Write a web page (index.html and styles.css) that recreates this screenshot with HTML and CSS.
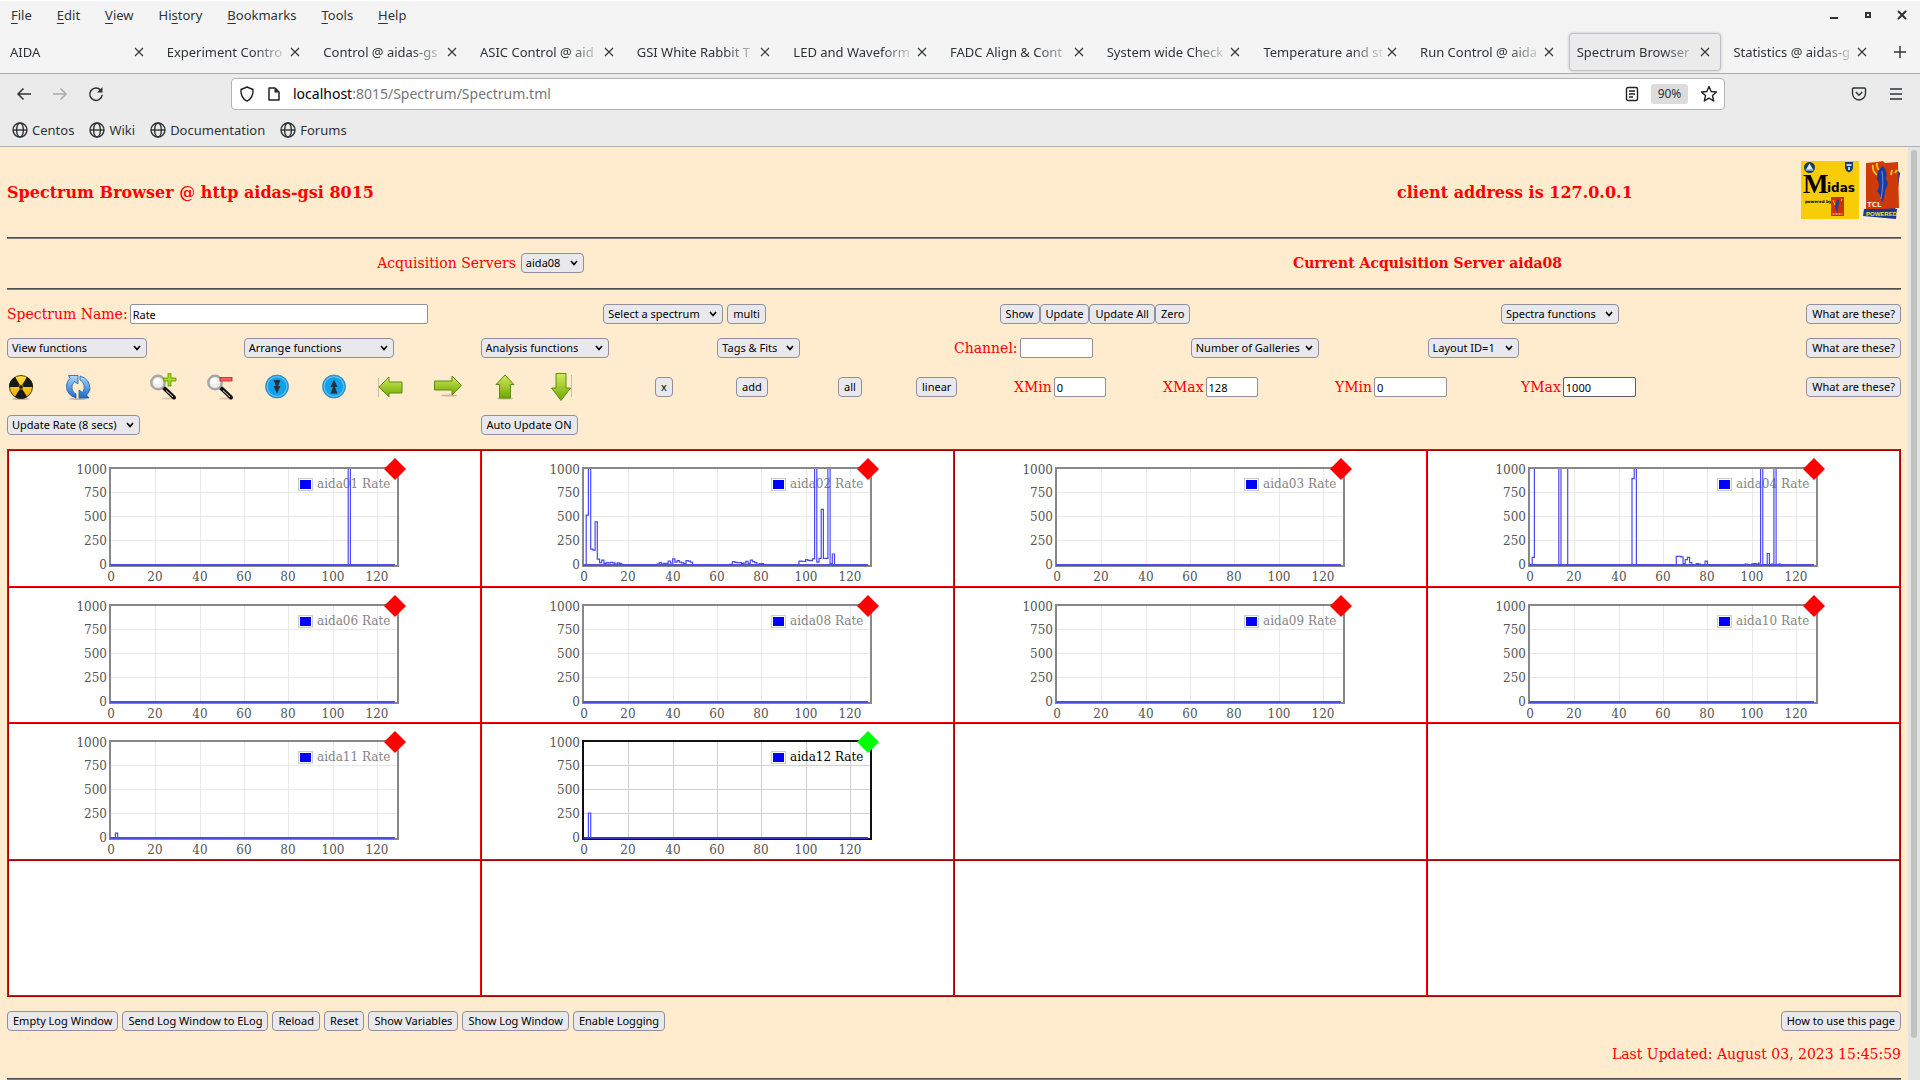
FILE: index.html
```html
<!DOCTYPE html>
<html lang="en">
<head>
<meta charset="utf-8">
<title>Spectrum Browser @ aidas-gsi</title>
<link rel="stylesheet" href="styles.css">
</head>
<body>
<svg class="defs" aria-hidden="true">
  <defs>
    <linearGradient id="green" x1="0" y1="0" x2="0" y2="1"><stop offset="0" stop-color="#d3ea5e"/><stop offset="1" stop-color="#6fa800"/></linearGradient>
    <linearGradient id="yellow" x1="0" y1="0" x2="0" y2="1"><stop offset="0" stop-color="#ffe23a"/><stop offset="1" stop-color="#f0a800"/></linearGradient>
    <linearGradient id="blue" x1="0" y1="0" x2="0" y2="1"><stop offset="0" stop-color="#a8dcff"/><stop offset="1" stop-color="#1a68c8"/></linearGradient>
    <radialGradient id="disc"><stop offset="0" stop-color="#08a4f4"/><stop offset="0.75" stop-color="#10a0ee"/><stop offset="0.85" stop-color="#5cc8fa"/><stop offset="1" stop-color="#1478c4"/></radialGradient>
    <symbol id="close" viewBox="0 0 10 10"><path d="M1 1L9 9M9 1L1 9" stroke="#2e3436" stroke-width="1.1"/></symbol>
    <symbol id="globe" viewBox="0 0 16 16"><g fill="none" stroke="#2e3436" stroke-width="1.4"><circle cx="8" cy="8" r="7"/><ellipse cx="8" cy="8" rx="3.4" ry="7"/><path d="M1 8H15"/></g></symbol>
    <symbol id="lens" viewBox="0 0 28 28"><ellipse cx="20" cy="25.5" rx="7" ry="1" fill="#d9c8ae"/><path d="M14.500 14.500L25 24.500" stroke="#111" stroke-width="4" stroke-linecap="round"/><path d="M17 17.500L24 24" stroke="#ddd" stroke-width="1"/><circle cx="9" cy="9.500" r="6.700" fill="#eee" stroke="#a5a5a5" stroke-width="2.400"/><circle cx="8" cy="8" r="3" fill="#fff"/></symbol>
  </defs>
</svg>

<header class="chrome">
  <div class="menubar">
    <nav class="menus">
      <a href="#"><u>F</u>ile</a><a href="#"><u>E</u>dit</a><a href="#"><u>V</u>iew</a><a href="#">Hi<u>s</u>tory</a><a href="#"><u>B</u>ookmarks</a><a href="#"><u>T</u>ools</a><a href="#"><u>H</u>elp</a>
    </nav>
    <div class="window-buttons">
      <button type="button" aria-label="Minimize"><svg width="10" height="10"><path d="M1 8H9" stroke="#2e3436" stroke-width="2"/></svg></button>
      <button type="button" aria-label="Maximize"><svg width="10" height="10"><rect x="3" y="3" width="4" height="4" fill="none" stroke="#2e3436" stroke-width="2"/></svg></button>
      <button type="button" aria-label="Close"><svg width="10" height="10"><path d="M1 1L9 9M9 1L1 9" stroke="#2e3436" stroke-width="2"/></svg></button>
    </div>
  </div>

  <div class="tabs">
    <div class="tab"><span>AIDA</span><button type="button" aria-label="Close tab"><svg><use href="#close"/></svg></button></div>
    <div class="tab"><span>Experiment Contro</span><button type="button" aria-label="Close tab"><svg><use href="#close"/></svg></button></div>
    <div class="tab"><span>Control @ aidas-gs</span><button type="button" aria-label="Close tab"><svg><use href="#close"/></svg></button></div>
    <div class="tab"><span>ASIC Control @ aid</span><button type="button" aria-label="Close tab"><svg><use href="#close"/></svg></button></div>
    <div class="tab"><span>GSI White Rabbit T</span><button type="button" aria-label="Close tab"><svg><use href="#close"/></svg></button></div>
    <div class="tab"><span>LED and Waveform</span><button type="button" aria-label="Close tab"><svg><use href="#close"/></svg></button></div>
    <div class="tab"><span>FADC Align &amp; Cont</span><button type="button" aria-label="Close tab"><svg><use href="#close"/></svg></button></div>
    <div class="tab"><span>System wide Check</span><button type="button" aria-label="Close tab"><svg><use href="#close"/></svg></button></div>
    <div class="tab"><span>Temperature and st</span><button type="button" aria-label="Close tab"><svg><use href="#close"/></svg></button></div>
    <div class="tab"><span>Run Control @ aida</span><button type="button" aria-label="Close tab"><svg><use href="#close"/></svg></button></div>
    <div class="tab active"><span>Spectrum Browser</span><button type="button" aria-label="Close tab"><svg><use href="#close"/></svg></button></div>
    <div class="tab"><span>Statistics @ aidas-g</span><button type="button" aria-label="Close tab"><svg><use href="#close"/></svg></button></div>
    <button type="button" class="new-tab" aria-label="New tab"><svg width="12" height="12"><path d="M6 0V12M0 6H12" stroke="#2e3436" stroke-width="1.4"/></svg></button>
  </div>

  <div class="toolbar">
    <div class="nav">
      <button type="button" aria-label="Back"><svg width="16" height="16"><path d="M15 8H2M7.500 2.500L2 8L7.500 13.500" fill="none" stroke="#2e3436" stroke-width="1.500"/></svg></button>
      <button type="button" aria-label="Forward"><svg width="16" height="16"><path d="M1 8H14M8.500 2.500L14 8L8.500 13.500" fill="none" stroke="#aaa" stroke-width="1.500"/></svg></button>
      <button type="button" aria-label="Reload"><svg width="16" height="16"><path d="M12.600 4A6.200 6.200 0 1 0 14.200 8.800" fill="none" stroke="#2e3436" stroke-width="1.500"/><path d="M14.500 1V6.500H9Z" fill="#2e3436"/></svg></button>
    </div>
    <div class="url">
      <svg width="16" height="16"><path d="M8 1L14 3.500C14.500 9 12 13 8 15.200C4 13 1.500 9 2 3.500Z" fill="none" stroke="#222" stroke-width="1.400" stroke-linejoin="round"/></svg>
      <svg width="14" height="16"><path d="M2 2H8L12 6V14H2Z" fill="none" stroke="#222" stroke-width="1.500" stroke-linejoin="round"/><path d="M7.500 2L12 6.500H7.500Z" fill="#222"/></svg>
      <p class="address"><b>localhost</b>:8015/Spectrum/Spectrum.tml</p>
      <button type="button" aria-label="Reader view"><svg width="14" height="16"><rect x="1.500" y="1.500" width="11" height="13" rx="1.500" fill="none" stroke="#222" stroke-width="1.400"/><path d="M4 5H10M4 8H10M4 11H8" stroke="#222" stroke-width="1.400"/></svg></button>
      <button type="button" class="zoom">90%</button>
      <button type="button" aria-label="Bookmark"><svg width="18" height="18"><path d="M9 1.500L11.200 6.500L16.500 7L12.500 10.600L13.700 16L9 13.200L4.300 16L5.500 10.600L1.500 7L6.800 6.500Z" fill="none" stroke="#222" stroke-width="1.400" stroke-linejoin="round"/></svg></button>
    </div>
    <div class="tools">
      <button type="button" aria-label="Pocket"><svg width="16" height="16"><path d="M2.500 2H13.500Q14.500 2 14.500 3V7.500A6.500 6.500 0 0 1 1.500 7.500V3Q1.500 2 2.500 2Z" fill="none" stroke="#2e3436" stroke-width="1.400"/><path d="M4.800 6L8 9.200L11.200 6" fill="none" stroke="#2e3436" stroke-width="1.500"/></svg></button>
      <button type="button" aria-label="Menu"><svg width="14" height="14"><path d="M1 2H13M1 7H13M1 12H13" stroke="#2e3436" stroke-width="1.500"/></svg></button>
    </div>
  </div>

  <nav class="bookmarks">
    <a href="#"><svg><use href="#globe"/></svg>Centos</a>
    <a href="#"><svg><use href="#globe"/></svg>Wiki</a>
    <a href="#"><svg><use href="#globe"/></svg>Documentation</a>
    <a href="#"><svg><use href="#globe"/></svg>Forums</a>
  </nav>
</header>

<div class="viewport">
<main>
  <div class="title-row">
    <h1>Spectrum Browser @ http aidas-gsi 8015</h1>
    <h2>client address is 127.0.0.1</h2>
    <div class="logos">
      <svg width="58" height="58" viewBox="0 0 58 58" role="img" aria-label="Midas">
        <rect width="58" height="58" fill="#f8cc08"/>
        <circle cx="8.500" cy="6.500" r="5.500" fill="#123a6e"/><path d="M8.500 2.500L12 8.500H5Z" fill="#dfe8f0"/><path d="M4.500 9H12.500" stroke="#dfe8f0"/>
        <path d="M44 1H52V6Q52 10 48 11.500Q44 10 44 6Z" fill="#163a80"/><path d="M45.500 4H50.500M48 6V9" stroke="#fff" stroke-width="1.500"/>
        <text x="2" y="32" class="logo-m">M</text><text x="26" y="31" class="logo-idas">idas</text>
        <text x="4" y="42" class="logo-tiny">powered by</text>
        <rect x="30" y="36" width="13" height="19" fill="#cf3306"/><path d="M37 38C40 41 36 46 37 52C33 47 34 42 37 38Z" fill="#24408c"/><path d="M32 39L34 44M40 40L41 38" stroke="#f8cc08"/><path d="M31.500 53H41.500" stroke="#eee" stroke-dasharray="2 1"/>
      </svg>
      <svg width="38" height="58" viewBox="0 0 38 58" role="img" aria-label="Tcl powered">
        <path d="M4 47L34 9L37 12L31 57L1 52Z" fill="#123a9c"/>
        <path d="M3 2L14 1L20 0L22 2L35 1L36 47L3 49Z" fill="#cf3a0a"/>
        <path d="M10 4Q9 10 14 14M14 2Q13 6 16 9M28 14L29 9M32 12L34 9" fill="none" stroke="#f8b818" stroke-width="2"/>
        <path d="M20 5Q25 10 23 18Q27 22 22 30Q22 35 19 42Q18 34 14 30Q18 24 14 18Q14 8 20 5Z" fill="#1c3c9c"/><path d="M19 10Q21 22 18 38" fill="none" stroke="#6c8ce0"/>
        <path d="M1 48L34 48L33 58L0 55Z" fill="#123a9c"/>
        <text x="4" y="46" class="logo-tcl">TCL</text><text x="3" y="55" class="logo-powered">POWERED</text>
      </svg>
    </div>
  </div>
  <hr>
  <div class="server-row">
    <div><label for="server">Acquisition Servers</label> <select id="server"><option>aida08</option></select></div>
    <strong>Current Acquisition Server aida08</strong>
  </div>
  <hr>

  <form class="controls" onsubmit="return false">
    <div class="row row-name">
      <div class="field"><label for="name">Spectrum Name:</label><input id="name" class="wide" value="Rate"></div>
      <div class="group centre"><select aria-label="Select a spectrum"><option>Select a spectrum</option></select><button type="button">multi</button></div>
      <div class="centre"><button type="button">Show</button><button type="button">Update</button><button type="button">Update All</button><button type="button">Zero</button></div>
      <div class="end"><select aria-label="Spectra functions"><option>Spectra functions</option></select></div>
      <div class="end"><button type="button">What are these?</button></div>
    </div>
    <div class="row row-functions">
      <div><select class="w-140" aria-label="View functions"><option>View functions</option></select></div>
      <div><select class="w-150" aria-label="Arrange functions"><option>Arrange functions</option></select></div>
      <div><select class="w-128" aria-label="Analysis functions"><option>Analysis functions</option></select></div>
      <div><select aria-label="Tags and fits"><option>Tags &amp; Fits</option></select></div>
      <div class="field"><label for="channel">Channel:</label><input id="channel" class="medium"></div>
      <div><select class="w-128" aria-label="Number of Galleries"><option>Number of Galleries</option></select></div>
      <div><select aria-label="Layout"><option>Layout ID=1</option></select></div>
      <div class="end"><button type="button">What are these?</button></div>
    </div>
    <div class="row row-icons">
      <button type="button" class="icon" aria-label="Zero all"><svg viewBox="0 0 28 28"><ellipse cx="14" cy="26" rx="9" ry="1" fill="#cbb898"/><circle cx="14" cy="14" r="11.500" fill="url(#yellow)" stroke="#4a3a10"/><path d="M14 14L7.800 4A12 12 0 0 1 20.200 4ZM14 14H26A12 12 0 0 1 20 24.300ZM14 14H2A12 12 0 0 0 8 24.300Z" fill="#1a1a1a" transform="rotate(180 14 14)"/><circle cx="14" cy="14" r="2.200" fill="#1a1a1a" stroke="#f2b800" stroke-width="0.600"/></svg></button>
      <button type="button" class="icon" aria-label="Refresh"><svg viewBox="0 0 28 28"><ellipse cx="14" cy="26" rx="9" ry="1" fill="#cbb898"/><path d="M12 25Q2 22 2.500 12Q3.500 7 6 5.500L4.500 2.500H14V11L10.500 8.500Q7 12 8 16Q9 20 12 21Z" fill="url(#blue)" stroke="#1c5cb0" stroke-width="0.800"/><path d="M16 3Q26 6 26 16Q25 20 22.500 22L25 25H15V17L18.500 19.500Q21 16 20 12Q19 8 16 7Z" fill="url(#blue)" stroke="#1c5cb0" stroke-width="0.800"/></svg></button>
      <button type="button" class="icon" aria-label="Zoom in"><svg viewBox="0 0 28 28"><use href="#lens"/><path d="M19 0H22V5H27V8H22V13H19V8H14.500V5H19Z" fill="#a8d820" stroke="#5c9400" stroke-width="0.800"/></svg></button>
      <button type="button" class="icon" aria-label="Zoom out"><svg viewBox="0 0 28 28"><use href="#lens"/><rect x="14" y="4.500" width="12" height="3.500" fill="#f06060" stroke="#b82828" stroke-width="0.800"/></svg></button>
      <button type="button" class="icon" aria-label="Compress"><svg viewBox="0 0 28 28"><circle cx="14" cy="13.500" r="11.500" fill="url(#disc)" stroke="#3c88b8" stroke-width="0.800"/><path d="M10.500 7H17.500L15 13H17.500L14 20.500L10.500 13H13Z" fill="#2a3038"/></svg></button>
      <button type="button" class="icon" aria-label="Expand"><svg viewBox="0 0 28 28"><circle cx="14" cy="13.500" r="11.500" fill="url(#disc)" stroke="#3c88b8" stroke-width="0.800"/><path d="M10.500 20.500H17.500L15 14H17.500L14 6.500L10.500 14H13Z" fill="#2a3038"/></svg></button>
      <button type="button" class="icon" aria-label="Left"><svg viewBox="0 0 28 28"><path d="M1.500 5V24" stroke="#d0bda0"/><path d="M2 14L12 4V9H25V20H12V24Z" fill="url(#green)" stroke="#5c8c10"/></svg></button>
      <button type="button" class="icon" aria-label="Right"><svg viewBox="0 0 28 28"><ellipse cx="15" cy="22.500" rx="8" ry="1" fill="#cbb898"/><path d="M27.500 12.500L18 3V8H0.500V17H18V22Z" fill="url(#green)" stroke="#5c8c10"/></svg></button>
      <button type="button" class="icon" aria-label="Up"><svg viewBox="0 0 28 28"><ellipse cx="14" cy="25.500" rx="8" ry="1" fill="#cbb898"/><path d="M14 2L23 11.500H19.500V25H8.500V11.500H5Z" fill="url(#green)" stroke="#5c8c10"/></svg></button>
      <button type="button" class="icon" aria-label="Down"><svg viewBox="0 0 28 28"><path d="M23.500 2V24" stroke="#d0bda0"/><path d="M13 27.500L3.500 15H8V0.500H18V15H22.500Z" fill="url(#green)" stroke="#5c8c10"/></svg></button>
      <div><button type="button">x</button></div>
      <div><button type="button">add</button></div>
      <div><button type="button">all</button></div>
      <div><button type="button">linear</button></div>
      <div class="field"><label for="xmin">XMin</label><input id="xmin" class="small" value="0"></div>
      <div class="field"><label for="xmax">XMax</label><input id="xmax" class="small" value="128"></div>
      <div class="field"><label for="ymin">YMin</label><input id="ymin" class="medium" value="0"></div>
      <div class="field"><label for="ymax">YMax</label><input id="ymax" class="medium hovered" value="1000"></div>
      <div class="end"><button type="button">What are these?</button></div>
    </div>
    <div class="row row-update">
      <div><select aria-label="Update rate"><option>Update Rate (8 secs)</option></select></div>
      <div><button type="button">Auto Update ON</button></div>
    </div>
  </form>

  <table class="gallery">
    <tr><td data-name="aida01"></td><td data-name="aida02"></td><td data-name="aida03"></td><td data-name="aida04"></td></tr>
    <tr><td data-name="aida06"></td><td data-name="aida08"></td><td data-name="aida09"></td><td data-name="aida10"></td></tr>
    <tr><td data-name="aida11"></td><td data-name="aida12"></td><td></td><td></td></tr>
    <tr><td></td><td></td><td></td><td></td></tr>
  </table>

  <div class="actions">
    <button type="button">Empty Log Window</button>
    <button type="button">Send Log Window to ELog</button>
    <button type="button">Reload</button>
    <button type="button">Reset</button>
    <button type="button">Show Variables</button>
    <button type="button">Show Log Window</button>
    <button type="button">Enable Logging</button>
    <button type="button" class="push">How to use this page</button>
  </div>
  <p class="updated">Last Updated: August 03, 2023 15:45:59</p>
  <hr>
</main>
<div class="scrollbar"><div class="thumb"></div></div>
</div>
<script src="charts.js"></script>
</body>
</html>
```
FILE: styles.css
```css
* { box-sizing: border-box; }

body {
  margin: 0;
  height: 100vh;
  display: flex;
  flex-direction: column;
  overflow: hidden;
  background: #ffebcd;
  font: 14px/20px "DejaVu Serif", serif;
}

.defs { position: absolute; width: 0; height: 0; }
svg { display: block; flex: none; }
a { color: inherit; text-decoration: none; }

/* Browser window */
.chrome {
  flex: none;
  background: #f4f4f4;
  border-top: 1px solid #fff;
  color: #2e3436;
  font: 13px/20px "Noto Sans", sans-serif;
}
.chrome button {
  border: 0;
  padding: 0;
  background: none;
  color: inherit;
  display: grid;
  place-items: center;
}
.menubar {
  height: 29px;
  padding: 0 13px 2px 11px;
  display: flex;
  justify-content: space-between;
  align-items: center;
}
.menus { display: flex; gap: 25px; }
.menus u { text-underline-offset: 3px; }
.window-buttons { display: flex; gap: 24px; }

.tabs { display: flex; height: 43px; padding: 3px 0 2px; }
.tab {
  flex: 1 1 0;
  min-width: 0;
  margin: 0 2px;
  padding: 0 10px 0 7px;
  border: 1px solid transparent;
  border-radius: 4px;
  display: flex;
  align-items: center;
  justify-content: space-between;
}
.tab span {
  flex: 1;
  white-space: nowrap;
  -webkit-mask-image: linear-gradient(to left, transparent, #000 36px);
  mask-image: linear-gradient(to left, transparent, #000 36px);
}
.tab svg { width: 10px; height: 10px; }
.tab.active { background: #ebebeb; border-color: #c0c0c8; box-shadow: 0 0 3px #bbb; }
.chrome .new-tab { width: 40px; }

.toolbar {
  height: 40px;
  padding: 0 17px 0 16px;
  border-top: 1px solid #a9a9a9;
  background: #ebebeb;
  display: flex;
  align-items: center;
}
.nav { width: 215px; display: flex; gap: 20px; }
.url {
  flex: 1;
  height: 32px;
  padding: 0 6px 0 7px;
  background: #fff;
  border: 1px solid #b4b4b4;
  border-radius: 4px;
  display: flex;
  align-items: center;
  gap: 12px;
}
.address { flex: 1; margin: 0; color: #777; font-size: 14px; }
.address b { font-weight: 400; color: #000; }
.chrome .zoom { width: 37px; height: 20px; border-radius: 3px; background: #dcdcdc; font: 12px/20px "Noto Sans", sans-serif; }
.tools { width: 178px; display: flex; gap: 22px; align-items: center; justify-content: flex-end; }

.bookmarks {
  height: 34px;
  padding: 0 12px;
  background: #ebebeb;
  border-bottom: 1px solid #b0b0b0;
  display: flex;
  align-items: center;
  gap: 15px;
}
.bookmarks a { display: flex; align-items: center; gap: 4px; }
.bookmarks svg { width: 16px; height: 16px; }

/* Page */
.viewport { flex: 1; min-height: 0; display: flex; overflow: hidden; }
main { flex: 1; min-width: 0; padding: 0 7px; color: #f00; }
.scrollbar { width: 12px; padding: 3px 3px 42px; background: #e3e4e4; display: flex; }
.thumb { flex: 1; border-radius: 3px; background: #c1c3c2; }
hr { margin: 0; border: 0; border-top: 1px solid #4e4e52; border-bottom: 1px solid #7c7c80; }

.title-row { height: 90px; display: grid; grid-template-columns: 1390fr 404fr 100fr; align-items: center; }
h1, h2 { margin: 0; padding-top: 2px; font-size: 16px; line-height: 24px; font-weight: 700; }
.logos { display: flex; gap: 4px; padding-bottom: 4px; justify-content: flex-end; }
.logo-m { font: bold 27px "Liberation Serif", serif; }
.logo-idas { font: bold 12px "DejaVu Sans", sans-serif; }
.logo-tiny { font: bold 4px "DejaVu Sans", sans-serif; }
.logo-tcl { font: bold 7px "DejaVu Sans", sans-serif; fill: #f4e0c8; }
.logo-powered { font: bold 6px "Liberation Sans", sans-serif; fill: #f4e818; }

.server-row { height: 49px; padding-bottom: 2px; display: grid; grid-template-columns: 1fr 1fr; align-items: center; justify-items: center; }
.server-row > div { display: flex; gap: 5px; }

main button:not(.icon), select, input {
  height: 20px;
  margin: 0;
  border: 1px solid #8f8f9d;
  font: 11px/18px "Noto Sans", sans-serif;
  color: #000;
}
main button:not(.icon) { padding: 0 5px; border-radius: 4px; background: #e9e9ed; white-space: nowrap; }
select {
  appearance: none;
  padding: 0 22px 0 4px;
  border-radius: 4px;
  background: #e9e9ed url("data:image/svg+xml,%3Csvg xmlns='http://www.w3.org/2000/svg' width='8' height='6'%3E%3Cpath d='M1 1L4 4.500L7 1' fill='none' stroke='%23000' stroke-width='1.600'/%3E%3C/svg%3E") no-repeat right 5px center;
}
input { padding: 0 2px; border-radius: 2px; background: #fff; }
input.hovered { border-color: #5c5c66; }
input.wide { width: 298px; }
input.medium { width: 73px; }
input.small { width: 52px; }
.w-128 { width: 128px; padding-right: 14px; }
.w-140 { width: 140px; }
.w-150 { width: 150px; }

.controls { padding: 7px 0 8px; }
.row { display: grid; align-items: center; height: 34px; }
.row > div { display: flex; min-width: 0; }
.row .centre { justify-content: center; }
.row .end { justify-content: flex-end; }
.group { gap: 4px; }
.field { gap: 2px; }
.field label { white-space: nowrap; }
.row-name { grid-template-columns: 471fr 413fr 408fr 320fr 282fr; }
.row-functions { grid-template-columns: repeat(8, minmax(0, 1fr)); }
.row-icons {
  height: 44px;
  grid-template-columns:
    minmax(0, 57fr) minmax(0, 85fr) repeat(7, minmax(0, 57fr)) minmax(0, 107fr)
    minmax(0, 81fr) minmax(0, 102fr) minmax(0, 78fr) minmax(0, 98fr)
    minmax(0, 149fr) minmax(0, 172fr) minmax(0, 186fr) minmax(0, 186fr) minmax(0, 194fr);
}
.row-update { height: 32px; grid-template-columns: 1fr 3fr; }
.icon { width: 28px; height: 28px; padding: 0; border: 0; background: none; }

.gallery {
  width: 100%;
  table-layout: fixed;
  border-spacing: 0;
  border: 1px solid;
  border-color: #f00 #a80000 #a80000 #f00;
}
.gallery td {
  height: 136px;
  padding: 0;
  background: #fff;
  border: 1px solid;
  border-color: #a80000 #f00 #f00 #a80000;
  vertical-align: top;
}
.gallery tr:nth-child(odd) td { height: 137px; }

.chart { margin: 0 auto; font: 12px "DejaVu Serif", serif; fill: #545454; }
.chart .frame { fill: none; stroke: #888; stroke-width: 2; }
.chart .grid { fill: none; stroke: #e8e8e8; stroke-width: 1; }
.chart .trace { fill: none; stroke: #4848f4; stroke-width: 1.2; }
.chart .zero { stroke: #5454d4; stroke-width: 2; }
.chart .swatch-box { fill: #fff; stroke: #ccc; }
.chart .swatch { fill: #00f; }
.chart .marker { fill: #f00; }
.chart .legend { fill: #858585; }
.chart .x-tick { text-anchor: middle; }
.chart .y-tick { text-anchor: end; }
.chart.selected .frame { stroke: #111; }
.chart.selected .zero { stroke: #22228c; }
.chart.selected .grid { stroke: #d0d0d0; }
.chart.selected .legend { fill: #000; }
.chart.selected .marker { fill: #0f0; }

.actions { margin-top: 14px; display: flex; gap: 4px; }
.actions .push { margin-left: auto; }
.updated { margin: 13px 0 14px; text-align: right; }
```
FILE: charts.js
```js
// Rate histograms: channel -> counts; channels that are not listed are zero.
const rates = {
  aida01: { 107: 2000 },
  aida02: {
    1: 520, 2: 2000, 3: 165, 4: 155, 5: 450, 6: 60, 7: 25, 8: 50, 9: 18, 10: 25, 11: 22, 12: 27, 13: 22, 14: 10, 15: 22, 16: 18,
    33: 10, 34: 25, 35: 10, 36: 18, 37: 18, 38: 40, 39: 20, 40: 65, 41: 30, 42: 45, 43: 30, 44: 22, 45: 15, 46: 45, 47: 40, 48: 30, 49: 5,
    66: 8, 67: 35, 68: 28, 69: 25, 70: 25, 71: 15, 72: 20, 73: 38, 74: 15, 75: 50, 76: 35, 77: 25, 78: 5, 79: 15, 80: 15,
    97: 40, 98: 38, 99: 38, 100: 55, 101: 48, 102: 45, 103: 65, 104: 2000, 105: 30, 106: 70, 107: 580, 108: 70, 109: 70, 110: 2000, 111: 15, 112: 115
  },
  aida04: {
    1: 80, 2: 2000, 3: 2000, 4: 2000, 5: 2000, 6: 2000, 7: 2000, 8: 2000, 9: 2000, 10: 2000, 11: 2000, 12: 2000, 14: 2000, 15: 2000, 16: 2000,
    46: 900, 47: 2000, 66: 90, 67: 90, 68: 85, 69: 15, 70: 55, 71: 80, 72: 25, 73: 5, 74: 5, 75: 15, 76: 10, 78: 5, 79: 40, 80: 5,
    97: 10, 98: 5, 99: 5, 100: 12, 101: 15, 102: 8, 103: 20, 104: 2000, 107: 120, 109: 8, 110: 2000, 112: 8
  },
  aida11: { 2: 50 },
  aida12: { 2: 260 }
};

const LEFT = 47, BASE = 114, PER_CHANNEL = 2.217, PER_COUNT = 0.096;
const xOf = channel => (LEFT + channel * PER_CHANNEL).toFixed(1);
const yOf = count => (BASE - count * PER_COUNT).toFixed(1);

function tracePath(data) {
  let path = `M${xOf(0)} ${yOf(data[0] || 0)}`;
  for (let i = 0; i < 128; i++) path += `V${yOf(data[i] || 0)}H${xOf(i + 1)}`;
  return path;
}

function chart(name) {
  let grid = '', ticks = '';
  for (let c = 0; c <= 120; c += 20) {
    const x = Math.round(LEFT + c * PER_CHANNEL);
    if (c) grid += `M${x + 0.5} 18V113`;
    ticks += `<text class="x-tick" x="${x}" y="130">${c}</text>`;
  }
  for (let v = 0; v <= 1000; v += 250) {
    const y = Math.round(BASE - v * PER_COUNT);
    if (v && v < 1000) grid += `M47 ${y - 0.5}H333`;
    ticks += `<text class="y-tick" x="43" y="${v === 1000 ? 23 : y + 4}">${v}</text>`;
  }
  return `<svg class="chart${name === 'aida12' ? ' selected' : ''}" width="361" height="134">
    <clipPath id="clip-${name}"><rect x="46" y="18" width="288" height="98"/></clipPath>
    <path class="grid" d="${grid}"/>
    <rect class="frame" x="46" y="17" width="288" height="98"/>
    <rect class="swatch-box" x="234.5" y="27.5" width="14" height="12"/>
    <rect class="swatch" x="236" y="29" width="11" height="9"/>
    <text class="legend" x="253" y="37">${name} Rate</text>
    <path class="zero" d="M46 114H${xOf(128)}"/>
    <path class="trace" clip-path="url(#clip-${name})" d="${tracePath(rates[name] || {})}"/>
    <path class="marker" d="M331 7L342 18L331 29L320 18Z"/>
    ${ticks}</svg>`;
}

document.querySelectorAll('.gallery td[data-name]').forEach(cell => {
  cell.innerHTML = chart(cell.dataset.name);
});
```
